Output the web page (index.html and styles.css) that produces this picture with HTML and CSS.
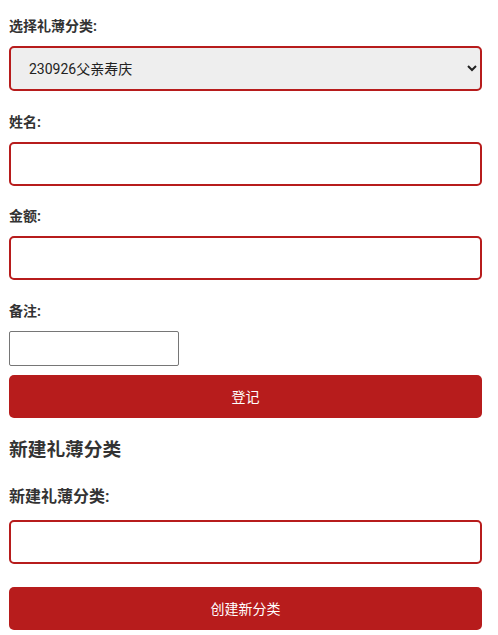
FILE: index.html
```html
<!DOCTYPE html>
<html lang="zh">
<head>
<meta charset="utf-8">
<link rel="stylesheet" href="styles.css">
</head>
<body>
<div class="page">
  <form class="form">
    <div class="group">
      <label class="label">选择礼薄分类:</label>
      <select class="field select">
        <option>230926父亲寿庆</option>
      </select>
    </div>
    <div class="group">
      <label class="label">姓名:</label>
      <input class="field" type="text">
    </div>
    <div class="group">
      <label class="label">金额:</label>
      <input class="field" type="text">
    </div>
    <div class="group group-note">
      <label class="label">备注:</label>
      <textarea class="note"></textarea>
    </div>
    <button type="button" class="btn">登记</button>
  </form>
  <h2 class="heading">新建礼薄分类</h2>
  <form class="form">
    <div class="group group-new">
      <label class="label label-new">新建礼薄分类:</label>
      <input class="field" type="text">
    </div>
    <button type="button" class="btn">创建新分类</button>
  </form>
</div>
</body>
</html>
```
FILE: styles.css
```css
html, body {
  margin: 0;
  padding: 0;
  background: #fff;
}
body {
  font-family: Roboto, "Noto Sans CJK SC", sans-serif;
  color: #333;
  font-size: 14px;
}
.page {
  padding: 16px 16px 0 9px;
}
.form {
  margin: 0;
}
.group {
  margin-bottom: 20.5px;
}
.label {
  display: block;
  font-size: 14px;
  line-height: 20px;
  font-weight: 700;
  color: #333;
  margin-bottom: 10px;
}
.field {
  display: block;
  box-sizing: border-box;
  width: 100%;
  height: 44px;
  border: 2px solid #b71c1c;
  border-radius: 5px;
  background: #fff;
  font-family: Roboto, "Noto Sans CJK SC", sans-serif;
  font-size: 14px;
  color: #222;
  padding: 0 10px;
  margin: 0;
  outline: none;
}
.select {
  height: 45px;
  background: #eeeeee;
  padding: 0 8px 0 14px;
}
.group-note {
  margin-bottom: 9px;
}
.note {
  display: block;
  box-sizing: border-box;
  width: 170px;
  height: 35px;
  margin: 0;
  border: 1px solid #767676;
  border-radius: 2px;
  resize: none;
}
.btn {
  display: block;
  box-sizing: border-box;
  width: 100%;
  height: 43px;
  border: none;
  border-radius: 5px;
  background: #b71c1c;
  color: #fff;
  font-family: Roboto, "Noto Sans CJK SC", sans-serif;
  font-size: 14px;
  margin: 0;
  padding: 0;
}
.heading {
  font-size: 18.72px;
  line-height: 24px;
  font-weight: 700;
  color: #333;
  margin: 20px 0 25px;
}
.label-new {
  font-size: 16px;
  margin-bottom: 13px;
}
.group-new {
  margin-bottom: 23px;
}
```
